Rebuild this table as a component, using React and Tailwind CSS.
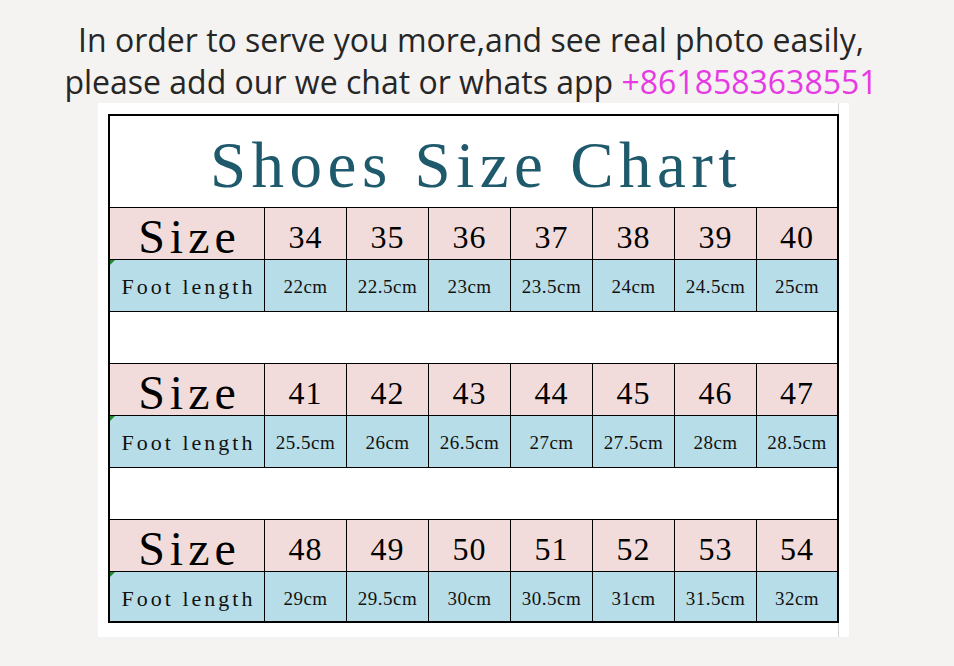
const rows = [
  {
    sizes: ["34", "35", "36", "37", "38", "39", "40"],
    lengths: ["22cm", "22.5cm", "23cm", "23.5cm", "24cm", "24.5cm", "25cm"],
  },
  {
    sizes: ["41", "42", "43", "44", "45", "46", "47"],
    lengths: ["25.5cm", "26cm", "26.5cm", "27cm", "27.5cm", "28cm", "28.5cm"],
  },
  {
    sizes: ["48", "49", "50", "51", "52", "53", "54"],
    lengths: ["29cm", "29.5cm", "30cm", "30.5cm", "31cm", "31.5cm", "32cm"],
  },
];

const serif = "font-['Liberation_Serif','Times_New_Roman',serif]";

function SizeBlock({ sizes, lengths, last }) {
  return (
    <>
      {/* size row */}
      <div className="grid grid-cols-[155px_repeat(6,82px)_80px] h-[52px] border-b border-black bg-[#f2dcdb]">
        <div className={`border-r border-black flex justify-center pt-[5px] text-[48px] leading-none tracking-[5px] pl-[5px] text-black ${serif}`}>
          Size
        </div>
        {sizes.map((s, i) => (
          <div
            key={s}
            className={`flex justify-center pt-[13px] text-[32px] leading-none tracking-[1px] text-black ${serif} ${i < 6 ? "border-r border-black" : ""}`}
          >
            {s}
          </div>
        ))}
      </div>

      {/* foot length row */}
      <div className={`grid grid-cols-[155px_repeat(6,82px)_80px] bg-[#b7dee8] ${last ? "h-[49px]" : "h-[52px] border-b border-black"}`}>
        <div className={`relative border-r border-black flex justify-center pt-[16px] text-[22px] leading-none tracking-[3px] pl-[3px] text-[#111] ${serif}`}>
          <span className="absolute left-0 top-0 w-0 h-0 border-t-[5px] border-r-[5px] border-t-[#1e8a2e] border-r-transparent" />
          Foot length
        </div>
        {lengths.map((l, i) => (
          <div
            key={l}
            className={`flex justify-center pt-[17px] text-[19px] leading-none tracking-[0.5px] text-[#111] ${serif} ${i < 6 ? "border-r border-black" : ""}`}
          >
            {l}
          </div>
        ))}
      </div>

      {/* empty spacer row */}
      {!last && <div className="h-[52px] border-b border-black bg-white" />}
    </>
  );
}

export default function App() {
  return (
    <div className="w-[954px] h-[666px] bg-[#f4f3f1] overflow-hidden">
      {/* contact line */}
      <div className="h-[103px] pt-[19px] pr-[12px] text-center text-[32px] leading-[42px] text-[#262626] font-['Open_Sans','Noto_Sans',sans-serif] whitespace-nowrap">
        <p>In order to serve you more,and see real photo easily,</p>
        <p>
          please add our we chat or whats app{" "}
          <span className="text-[#e63ae4]">+8618583638551</span>
        </p>
      </div>

      {/* chart sheet */}
      <div className="ml-[98px] w-[751px] h-[534px] bg-white pl-[10px]">
        <div className="w-[731px] h-full border-r border-[#d4d4d4] pt-[11px]">
          <div className="w-[731px] border-2 border-black">
            <div className="h-[92px] border-b border-black bg-white flex justify-center pt-[17px] pl-[5px]">
              <span className={`text-[65px] leading-none tracking-[5.5px] text-[#1f5a6c] ${serif}`}>
                Shoes Size Chart
              </span>
            </div>
            {rows.map((r, i) => (
              <SizeBlock key={i} sizes={r.sizes} lengths={r.lengths} last={i === rows.length - 1} />
            ))}
          </div>
        </div>
      </div>
    </div>
  );
}
